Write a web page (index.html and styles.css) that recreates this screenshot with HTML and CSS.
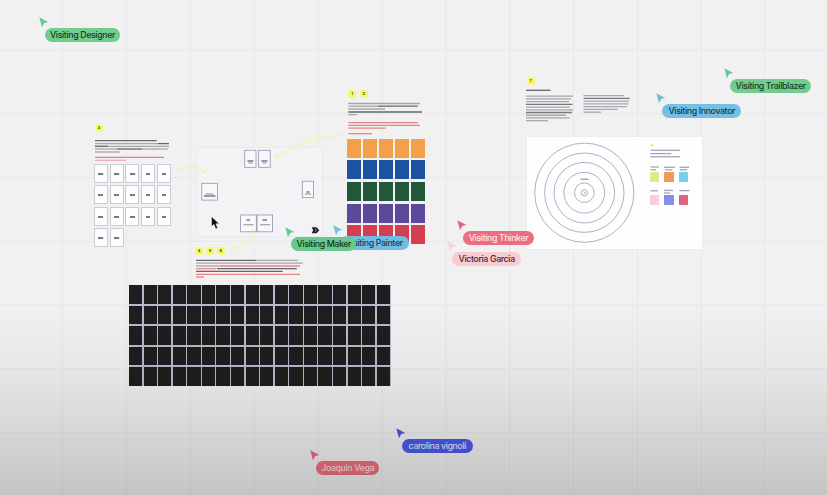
FILE: index.html
```html
<!DOCTYPE html>
<html lang="en">
<head>
<meta charset="utf-8">
<title>Workshop board</title>
<link rel="stylesheet" href="styles.css">
</head>
<body>
<main class="board">
  <section class="node frame"></section>
  <section class="node panel"></section>
  <section class="node notes" data-cells="17"></section>
  <section class="node colors" data-rows="orange blue green purple red"></section>
  <section class="node dark" data-cells="90"></section>
  <section class="node palette">
    <i class="lime"></i><i class="tangerine"></i><i class="sky"></i>
    <i class="pink"></i><i class="violet"></i><i class="rose"></i>
  </section>

  <svg class="ink" viewBox="0 0 827 495">
    <g class="arrows">
      <path d="M177 170.5Q192 162 205.5 172M202.500 171.500L206 172.500L206.500 169"/>
      <path d="M342 135.500C316 136 296 144 276 157.500M277 153.500L275 158L279.500 157.500"/>
      <path d="M231 249.500Q243 247 255 236"/>
    </g>
    <g class="cards">
      <rect x="244.700" y="150.300" width="11.300" height="17"/><rect x="258.700" y="150.300" width="11.500" height="17"/>
      <rect x="201.800" y="183.300" width="15.700" height="16.800"/><rect x="302.300" y="181.200" width="11.300" height="16.500"/>
      <rect x="240.600" y="215" width="15.700" height="16.800"/><rect x="257" y="215" width="15.600" height="16.800"/>
    </g>
    <g class="rings">
      <circle cx="584.300" cy="192.700" r="49.600"/><circle cx="584.300" cy="192.700" r="39.700"/>
      <circle cx="584.300" cy="192.700" r="30.300"/><circle cx="584.300" cy="192.700" r="20.400"/>
      <circle cx="584.300" cy="192.700" r="9.800"/><circle cx="584.300" cy="192.700" r="3.200"/>
      <path d="M583.500 191.500l2 1.200l-2 1.200"/>
    </g>
    <circle class="dot" cx="652" cy="145.300" r="1.300"/>
    <g id="lines"></g>
    <path class="stamp" d="M311.700 227.300H316.500L319.300 230.200L316.500 233.200H311.700L313.200 230.200Z"/>
    <path class="stamp-cut" d="M314.700 228.500L316.700 230.200L314.700 232"/>
  </svg>

  <div class="node badges b-left"><b>3</b></div>
  <div class="node badges b-colors"><b>1</b><b>2</b></div>
  <div class="node badges b-low"><b>4</b><b>5</b><b>6</b></div>
  <div class="node badges b-right"><b>7</b></div>

  <div id="people"></div>
  <svg class="node mouse" viewBox="0 0 9 14"><path d="M.5.5V10.500L2.900 8.400L4.800 12.900L6.700 12.100L4.900 7.800H8.200Z"/></svg>
  <div class="shade"></div>
</main>
<script src="board.js"></script>
</body>
</html>
```
FILE: styles.css
```css
* { box-sizing: border-box; }
body { margin: 0; overflow: hidden; font-family: Inter, "Liberation Sans", sans-serif; }
.board {
  position: relative;
  width: 827px;
  height: 495px;
  overflow: hidden;
  background-color: #f1f1f2;
  background-image:
    linear-gradient(to right, #e8e7eb 1px, transparent 1px),
    linear-gradient(to bottom, #e7e6ea 1px, transparent 1px);
  background-size: 63.9px 63.8px;
  background-position: -2px 49.500px;
}
.node { position: absolute; }
.ink { position: absolute; left: 0; top: 0; width: 827px; height: 495px; }
.frame { left: 195.500px; top: 147px; width: 127px; height: 90px; background: #f3f3f5; border: 1px solid #e9e9ee; }
.panel { left: 527px; top: 137px; width: 175px; height: 112px; background: #fefefe; box-shadow: 0 0 1px #d8d8de; }

.notes {
  left: 93.700px; top: 163.500px; width: 77.500px;
  display: grid; grid-template-columns: repeat(5, 14px); grid-auto-rows: 19px;
  column-gap: 1.850px; row-gap: 2.500px;
}
.notes i { background: #fdfdfe; border: 1px solid #c9cbd8; display: grid; place-items: center; }
.notes i::after { content: ""; width: 4.500px; height: 1.700px; margin-top: 1.500px; background: #777780; }

.colors {
  left: 347.300px; top: 138.700px;
  display: grid; grid-template-columns: repeat(5, 13.500px); grid-auto-rows: 18.900px;
  column-gap: 2.500px; row-gap: 2.750px;
}
.orange { background: #f4a049; }
.blue { background: #1c529f; }
.green { background: #235739; }
.purple { background: #5b4a9b; }
.red { background: #d73d50; }

.dark {
  left: 128.500px; top: 284.500px; width: 262px; height: 101.500px; padding: .5px;
  display: grid; grid-template: repeat(5, 1fr) / repeat(18, 1fr);
  column-gap: 1.300px; row-gap: 2px;
  background: #b9b8cc;
}
.dark i { background: #1e1e1f; }

.palette {
  left: 649.700px; top: 172.300px;
  display: grid; grid-template-columns: repeat(3, 9.300px); grid-auto-rows: 10.200px;
  column-gap: 5.300px; row-gap: 12.500px;
}
.lime { background: #dbeb8e; }
.tangerine { background: #f19a56; }
.sky { background: #78d0ef; }
.pink { background: #fbcbdf; }
.violet { background: #858fe9; }
.rose { background: #e36480; }

.arrows { fill: none; stroke: #f4f68a; stroke-width: 1; }
.cards { fill: #f8f8fb; stroke: #8f93b3; stroke-width: .8; }
.rings { fill: none; stroke: #a3a8bd; stroke-width: .9; }
.dot { fill: #e4ee5a; }
.stamp { fill: #1c1c1c; }
.stamp-cut { fill: none; stroke: #ddd; stroke-width: .6; }

.badges { display: flex; }
.badges b {
  display: grid; place-items: center; width: 8px; height: 8px; border-radius: 50%;
  background: #f5fa62; color: #45461c; font-size: 4px; line-height: 1;
}
.b-left { left: 94.700px; top: 123.700px; }
.b-colors { left: 348px; top: 89.800px; gap: 3.700px; }
.b-low { left: 195.200px; top: 247.300px; gap: 2.800px; }
.b-right { left: 526.700px; top: 76.500px; }

.pointer { position: absolute; width: 10px; height: 11px; }
.tag {
  position: absolute; height: 14px; border-radius: 7px;
  display: flex; align-items: center; justify-content: center;
  font-size: 8.800px; font-weight: 500; letter-spacing: -.38px; line-height: 14px; white-space: nowrap;
}
.mouse { left: 210.500px; top: 215.500px; width: 9px; height: 14px; fill: #111; stroke: #fff; stroke-width: .5; }
.shade {
  position: absolute; inset: 0;
  background: linear-gradient(to bottom, transparent 60%, rgba(0, 0, 0, .035) 73%, rgba(0, 0, 0, .11) 87%, rgba(0, 0, 0, .19) 100%);
}
```
FILE: board.js
```js
const svgNS = "http://www.w3.org/2000/svg";

document.querySelectorAll("[data-cells]").forEach((grid) => {
  for (let n = 0; n < Number(grid.dataset.cells); n++) grid.append(document.createElement("i"));
});
document.querySelectorAll("[data-rows]").forEach((grid) => {
  grid.dataset.rows.split(" ").forEach((name) => {
    for (let n = 0; n < 5; n++) {
      const cell = document.createElement("i");
      cell.className = name;
      grid.append(cell);
    }
  });
});

// Text seen from far away: [x start, x end, y, colour, thickness]
const grey = "#a6a6ab", bold = "#66666b", red = "#ea8583", slate = "#a4a6b2";
const lines = [
  [95, 156.7, 140.6, bold], [95, 158, 143.6, grey], [158, 169, 143.6, bold],
  [95, 108, 146.3, bold], [108, 169, 146.3, grey], [95, 117, 149, grey],
  [117, 142, 149, bold], [142, 167.7, 149, grey], [95, 120, 152, grey],
  [95, 164, 157.3, "#e8788f"], [95, 126, 160.3, "#eeb0bb"],

  [348.3, 420, 103.5, grey], [348.3, 378, 106.2, grey], [378, 417.7, 106.2, bold],
  [348.3, 385, 109, grey], [348.3, 422, 112, bold], [348.3, 356.7, 114.7, grey],
  [348.3, 418.3, 122.7, red], [348.3, 420, 125.4, red], [348.3, 385.7, 128.2, red], [348.3, 372, 133.7, red],

  [196, 256.7, 260.3, bold], [256.7, 298, 260.3, grey], [196, 302.7, 263.2, grey],
  [196, 220, 266, grey], [220, 300, 266, red], [196, 216, 268.7, red], [217, 296.7, 268.7, bold],
  [196, 282.7, 271.4, bold], [196, 300, 274.3, red], [196, 204, 277, red],

  [526, 550.5, 90.3, bold],
  [650.3, 680.3, 150.3, slate], [650.3, 671.3, 153.6, slate], [650.3, 680.3, 156.7, slate],
  [650.5, 659, 167, slate], [650.5, 656, 169.8, slate], [664, 675, 167.3, slate], [665, 672.5, 169.8, slate],
  [679.5, 689, 167.3, slate], [680, 687, 169.8, slate],
  [650.5, 658, 190.8, slate], [664, 673, 190.4, slate], [664, 670, 193, slate], [679.5, 689.5, 190.6, slate],
  [580.5, 588.5, 179.3, slate, 1.4],
  [247.5, 253.5, 161, bold], [248.5, 252.5, 163, grey], [261.5, 267.5, 161, bold], [262.5, 266.5, 163, grey],
  [205.5, 213.5, 194, grey], [204, 215.5, 196, bold], [306.5, 309.5, 192, bold], [305, 311, 194, grey],
  [246.5, 250, 220, bold], [243.5, 253.5, 224.7, grey], [262.5, 267, 220, bold], [260, 270, 224.7, grey]
];
[573, 571, 569, 572.5, 570, 573, 572, 566, 570, 548].forEach((end, n) =>
  lines.push([526, end, 96.2 + n * 2.72, n === 3 || n === 6 ? "#77777d" : grey]));
[624, 629.5, 629, 628.5, 627, 618, 601].forEach((end, n) =>
  lines.push([583.5, end, 95.7 + n * 2.75, n === 1 ? "#77777d" : slate]));

const layer = document.getElementById("lines");
lines.forEach(([x1, x2, y, color, weight = 1.3]) => {
  const line = document.createElementNS(svgNS, "line");
  Object.entries({ x1, x2, y1: y, y2: y, stroke: color, "stroke-width": weight })
    .forEach(([key, value]) => line.setAttribute(key, value));
  layer.append(line);
});

// [name, pill x, pill y, pill width, fill, text colour, pointer x, pointer y, pointer fill]
const people = [
  ["Visiting Designer", 44.7, 28, 75.6, "#72cb8f", "#163d26", 38.5, 16.5, "#68c994"],
  ["Visiting Trailblazer", 730, 78.5, 81.3, "#72cb8f", "#163d26", 723.5, 67.5, "#68c994"],
  ["Visiting Innovator", 662.3, 103.7, 79, "#75bfe4", "#12364d", 656, 92.7, "#72bbdc"],
  ["Visiting Painter", 339.5, 236.3, 69.2, "#71bde3", "#173c57", 333, 225, "#76bce8"],
  ["Visiting Maker", 291.3, 237.4, 65, "#69c98a", "#12351f", 284.7, 226.7, "#68c994"],
  ["Visiting Thinker", 463.3, 230.7, 70.4, "#ec6d80", "#ffe6ea", 456.7, 219.5, "#e3667d"],
  ["Victoria Garcia", 452.3, 252, 68.7, "#f9ccd1", "#49262e", 446.5, 241, "#f8d0d8"],
  ["carolina vignoli", 402, 438.7, 70.7, "#4a5be9", "#dfe3ff", 396, 428, "#4c57e0"],
  ["Joaquin Vega", 316, 461, 63.3, "#ef7080", "#ffdce0", 309.7, 450, "#ec6780"]
];
const host = document.getElementById("people");
people.forEach(([name, x, y, w, fill, ink, px, py, pfill]) => {
  host.insertAdjacentHTML("beforeend",
    `<svg class="pointer" style="left:${px}px;top:${py}px" viewBox="0 0 10 11"><path fill="${pfill}" d="M.3.3L9.300 5L5.200 6.100L3 10.200Z"/></svg>
     <div class="tag" style="left:${x}px;top:${y}px;width:${w}px;background:${fill};color:${ink}">${name}</div>`);
});
```
